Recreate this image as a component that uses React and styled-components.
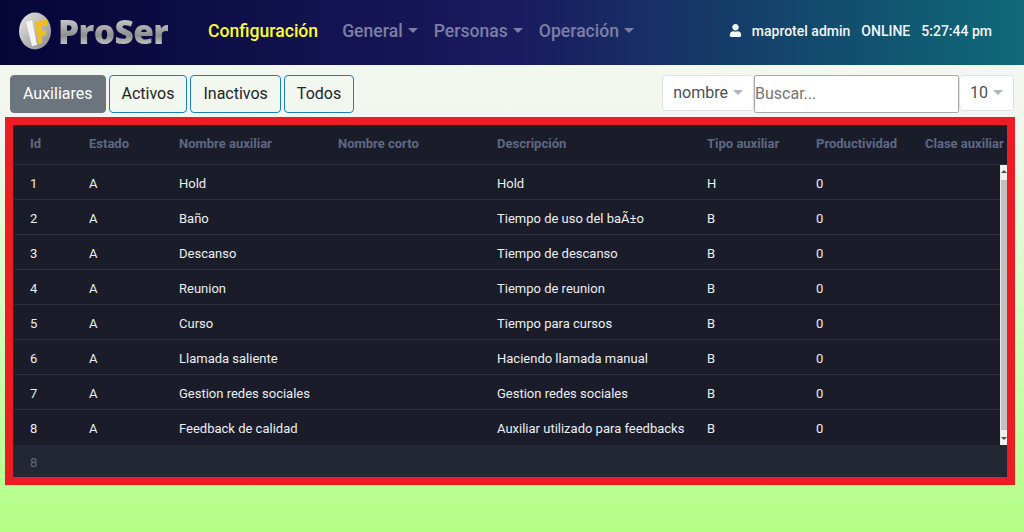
import React from 'react'
import styled, { createGlobalStyle } from 'styled-components'
import { FaUser } from 'react-icons/fa'

const GlobalStyle = createGlobalStyle`
  html, body {
    margin: 0;
    height: 100%;
  }
  body {
    font-family: 'Roboto', 'Liberation Sans', sans-serif;
    background: linear-gradient(180deg, #f4f7f3 0%, #f1f7ee 25%, #b3ff85 100%);
    background-attachment: fixed;
    overflow: hidden;
  }
`

const Page = styled.div`
  display: flex;
  flex-direction: column;
  width: 1024px;
  height: 532px;
`

const Header = styled.header`
  display: flex;
  align-items: center;
  height: 65px;
  flex: none;
  padding: 0 32px 4px 17px;
  box-sizing: border-box;
  background: linear-gradient(90deg, #050537 0%, #1a1a5e 50%, #0e6a78 100%);
`

const Logo = styled.div`
  display: flex;
  align-items: center;
  gap: 4px;
  width: 191px;
  flex: none;
`

const LogoText = styled.span`
  font-family: 'Open Sans', 'Liberation Sans', sans-serif;
  font-size: 33.5px;
  font-weight: 800;
  letter-spacing: -0.6px;
  background-image: linear-gradient(180deg, #d9d9d9 15%, #8f8f8f 60%, #e0e0e0 90%);
  -webkit-background-clip: text;
  -webkit-text-fill-color: transparent;
`

const Nav = styled.nav`
  display: flex;
  align-items: center;
  flex: 1;
  gap: 16px;
`

const NavLink = styled.span`
  display: inline-flex;
  align-items: center;
  font-size: 17.6px;
  font-weight: 500;
  color: ${p => (p.$active ? '#ffff2e' : '#7b7fa6')};
  margin-right: ${p => (p.$active ? '8px' : '0')};
`

const Caret = styled.i`
  display: inline-block;
  margin-left: ${p => p.$gap || 5}px;
  border-top: 5px solid ${p => p.$color || '#7b7fa6'};
  border-left: 5px solid transparent;
  border-right: 5px solid transparent;
`

const UserBox = styled.div`
  display: flex;
  align-items: center;
  gap: 11px;
  font-size: 14px;
  font-weight: 500;
  color: #f2f6f8;
`

const UserName = styled.span`
  display: inline-flex;
  align-items: center;
  gap: 10px;
`

const Toolbar = styled.div`
  display: flex;
  align-items: center;
  justify-content: space-between;
  padding: 10px 10px 4px 10px;
`

const Group = styled.div`
  display: flex;
  gap: 3px;
`

const Tab = styled.button`
  height: 38px;
  padding: 0 12px 2px;
  font: 400 16px 'Roboto', sans-serif;
  border-radius: 4px;
  color: ${p => (p.$active ? '#fff' : '#212529')};
  background: ${p => (p.$active ? '#6c757d' : 'transparent')};
  border: 1px solid ${p => (p.$active ? '#6c757d' : '#1a7fc4')};
`

const Search = styled.div`
  display: flex;
`

const Select = styled.button`
  display: inline-flex;
  align-items: center;
  height: 36px;
  padding: 0 10px 2px;
  font: 400 16px 'Roboto', sans-serif;
  color: #495057;
  background: #fff;
  border: 1px solid #dee2e6;
  border-radius: 4px;
`

const SearchInput = styled.input`
  width: 205px;
  height: 38px;
  padding: 0 0 2px;
  box-sizing: border-box;
  font: 400 16px 'Roboto', sans-serif;
  color: #495057;
  background: #fff;
  border: 1px solid #a9a9a9;
  border-radius: 2px;
  &::placeholder {
    color: #757575;
    opacity: 1;
  }
`

const TableFrame = styled.div`
  margin: 0 9px 0 5px;
  border: 8px solid #ed1c24;
  background: #1a1d29;
  height: 352px;
  display: flex;
  flex-direction: column;
  overflow: hidden;
  flex: none;
`

const columns = '59px 90px 159px 159px 210px 109px 109px 100px'

const HeadRow = styled.div`
  display: grid;
  grid-template-columns: ${columns};
  align-items: center;
  height: 40px;
  flex: none;
  padding: 0 0 2px 17px;
  box-sizing: border-box;
  border-bottom: 1px solid #2c303d;
`

const HeadCell = styled.div`
  font-size: 13px;
  font-weight: 700;
  color: #5f6785;
  white-space: nowrap;
`

const BodyWrap = styled.div`
  display: flex;
  height: 280px;
  flex: none;
`

const Rows = styled.div`
  flex: 1;
  min-width: 0;
  overflow: hidden;
`

const Row = styled.div`
  display: grid;
  grid-template-columns: ${columns};
  align-items: center;
  height: 35px;
  padding: 2px 0 0 17px;
  box-sizing: border-box;
  border-bottom: 1px solid #2c303d;
  &:last-child {
    border-bottom: none;
  }
`

const Cell = styled.div`
  font-size: 13px;
  color: #eceef2;
  white-space: nowrap;
`

const Scrollbar = styled.div`
  display: flex;
  flex-direction: column;
  justify-content: space-between;
  width: 7px;
  flex: none;
  box-sizing: border-box;
  border-left: 1px solid #ececec;
  background: #c1c1c1;
`

const ScrollArrow = styled.div`
  height: 15px;
  background: #f1f1f1;
  display: flex;
  align-items: ${p => (p.$down ? 'flex-end' : 'flex-start')};
  justify-content: center;
  padding: 5px 0;
  box-sizing: border-box;
  &::after {
    content: '';
    border-left: 3px solid transparent;
    border-right: 3px solid transparent;
    ${p => (p.$down ? 'border-top' : 'border-bottom')}: 3px solid #505050;
  }
`

const Footer = styled.div`
  flex: 1;
  display: flex;
  align-items: center;
  padding: 2px 0 0 17px;
  background: #222733;
  font-size: 13px;
  color: #5f6785;
`

const heads = ['Id', 'Estado', 'Nombre auxiliar', 'Nombre corto', 'Descripción', 'Tipo auxiliar', 'Productividad', 'Clase auxiliar']

const data = [
  [1, 'A', 'Hold', '', 'Hold', 'H', 0],
  [2, 'A', 'Baño', '', 'Tiempo de uso del baÃ±o', 'B', 0],
  [3, 'A', 'Descanso', '', 'Tiempo de descanso', 'B', 0],
  [4, 'A', 'Reunion', '', 'Tiempo de reunion', 'B', 0],
  [5, 'A', 'Curso', '', 'Tiempo para cursos', 'B', 0],
  [6, 'A', 'Llamada saliente', '', 'Haciendo llamada manual', 'B', 0],
  [7, 'A', 'Gestion redes sociales', '', 'Gestion redes sociales', 'B', 0],
  [8, 'A', 'Feedback de calidad', '', 'Auxiliar utilizado para feedbacks', 'B', 0],
]

function LogoMark() {
  return (
    <svg width="37" height="40" viewBox="0 0 37 40">
      <defs>
        <linearGradient id="ring" x1="0" y1="0" x2="1" y2="1">
          <stop offset="0" stopColor="#e8e8e8" />
          <stop offset="1" stopColor="#8a8a8a" />
        </linearGradient>
      </defs>
      <ellipse cx="18" cy="20" rx="16" ry="18.5" fill="url(#ring)" />
      <path d="M9 11 L15 9 L20 34 L15 35 Z" fill="#f5f5f5" />
      <path d="M18 11 L30 8 L30 14 L25 15 L25 20 L29 19 L29 24 L25 25 L25 32 L21 33 Z" fill="#efbe22" />
    </svg>
  )
}

export default function App() {
  return (
    <Page>
      <GlobalStyle />
      <Header>
        <Logo>
          <LogoMark />
          <LogoText>ProSer</LogoText>
        </Logo>
        <Nav>
          <NavLink $active>Configuración</NavLink>
          <NavLink>General<Caret /></NavLink>
          <NavLink>Personas<Caret /></NavLink>
          <NavLink>Operación<Caret /></NavLink>
        </Nav>
        <UserBox>
          <UserName><FaUser size={13} />maprotel admin</UserName>
          <span>ONLINE</span>
          <span>5:27:44 pm</span>
        </UserBox>
      </Header>
      <Toolbar>
        <Group>
          <Tab $active>Auxiliares</Tab>
          <Tab>Activos</Tab>
          <Tab>Inactivos</Tab>
          <Tab>Todos</Tab>
        </Group>
        <Search>
          <Select>nombre<Caret $gap={5} $color="#adb5bd" /></Select>
          <SearchInput placeholder="Buscar..." readOnly />
          <Select>10<Caret $gap={5} $color="#adb5bd" /></Select>
        </Search>
      </Toolbar>
      <TableFrame>
        <HeadRow>
          {heads.map(h => <HeadCell key={h}>{h}</HeadCell>)}
        </HeadRow>
        <BodyWrap>
          <Rows>
            {data.map(row => (
              <Row key={row[0]}>
                {row.map((c, i) => <Cell key={i}>{c}</Cell>)}
              </Row>
            ))}
          </Rows>
          <Scrollbar>
            <ScrollArrow />
            <ScrollArrow $down />
          </Scrollbar>
        </BodyWrap>
        <Footer>8</Footer>
      </TableFrame>
    </Page>
  )
}
